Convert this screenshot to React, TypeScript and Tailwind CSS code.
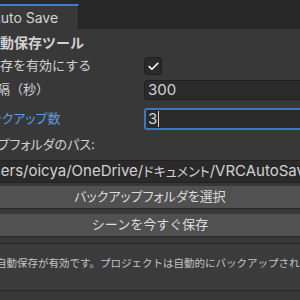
import { Check } from 'lucide-react';

const cjk = "font-['Inter','Noto_Sans_CJK_JP',sans-serif]";

export default function App() {
  return (
    <div className={`w-[300px] h-[300px] overflow-hidden bg-[#383838] text-[#d2d2d2] ${cjk}`}>
      {/* Tab bar */}
      <div className="h-[29px] bg-[#282828] flex items-end">
        <div className="w-[79px] h-[25px] overflow-hidden bg-[#383838] border-t-2 border-t-[#3b7fd4] border-r border-r-[#1f1f1f] flex items-center">
          <span className="-ml-[9px] text-[14px] whitespace-nowrap">Auto Save</span>
        </div>
      </div>

      <div className="flex flex-col">
        {/* Title */}
        <div className="mt-[3px] h-[20px] flex items-center overflow-hidden">
          <span className="-ml-[14px] text-[14px] font-bold whitespace-nowrap">自動保存ツール</span>
        </div>

        {/* Enable */}
        <div className="mt-[4px] h-[20px] flex items-center">
          <div className="w-[144px] overflow-hidden">
            <span className="block -ml-[39px] text-[13px] whitespace-nowrap">自動保存を有効にする</span>
          </div>
          <div className="w-[18px] h-[18px] rounded-[3px] bg-[#2a2a2a] border border-[#1f1f1f] flex items-center justify-center">
            <Check className="w-[13px] h-[13px] text-white" strokeWidth={3} />
          </div>
        </div>

        {/* Interval */}
        <div className="mt-[4px] h-[20px] flex items-center">
          <div className="w-[144px] overflow-hidden">
            <span className="block -ml-[42px] text-[13px] whitespace-nowrap">保存間隔（秒）</span>
          </div>
          <div className="flex-1 -mr-[10px] h-[20px] rounded-[3px] bg-[#2a2a2a] border border-[#212121] flex items-center px-[3px]">
            <span className="text-[15px]">300</span>
          </div>
        </div>

        {/* Backup count */}
        <div className="mt-[8px] h-[22px] flex items-center">
          <div className="w-[144px] overflow-hidden">
            <span className="block -ml-[47px] text-[13px] text-[#5c9de6] whitespace-nowrap [font-feature-settings:'palt']">最大バックアップ数</span>
          </div>
          <div className="flex-1 -mr-[10px] h-[22px] rounded-[3px] bg-[#2a2a2a] border-2 border-[#3a78c0] flex items-center px-[2px]">
            <span className="text-[15px]">3</span>
            <span className="ml-[1px] w-px h-[16px] bg-[#d8d8d8]" />
          </div>
        </div>

        {/* Folder label */}
        <div className="mt-[6px] h-[18px] flex items-center overflow-hidden">
          <span className="-ml-[59px] text-[13px] whitespace-nowrap [font-feature-settings:'palt']">バックアップフォルダのパス:</span>
        </div>

        {/* Path */}
        <div className="mt-[6px] h-[23px] -mx-[6px] bg-[#2a2a2a] border border-[#222] flex items-center overflow-hidden">
          <span className="-ml-[34px] text-[15px] whitespace-nowrap">
            C:/Users/oicya/OneDrive/<span className="text-[13px] [font-feature-settings:'palt']">ドキュメント</span>/VRCAutoSave
          </span>
        </div>

        {/* Buttons */}
        <button className="mt-[3px] h-[23px] -mx-[6px] bg-[#515151] border-b border-[#262626] text-[13px] text-[#dcdcdc] flex items-center justify-center [font-feature-settings:'palt']">
          バックアップフォルダを選択
        </button>
        <button className="mt-[5px] h-[23px] -mx-[6px] bg-[#515151] border-b border-[#262626] text-[13px] text-[#dcdcdc] flex items-center justify-center">
          シーンを今すぐ保存
        </button>

        {/* Help box */}
        <div className="mt-[6px] h-[48px] -mx-[6px] bg-[#3b3b3b] border border-[#262626] overflow-hidden">
          <p className="pt-[12px] ml-[1px] text-[10.5px] text-[#c4c4c4] whitespace-nowrap">
            自動保存が有効です。プロジェクトは自動的にバックアップされます。
          </p>
        </div>
      </div>
    </div>
  );
}
